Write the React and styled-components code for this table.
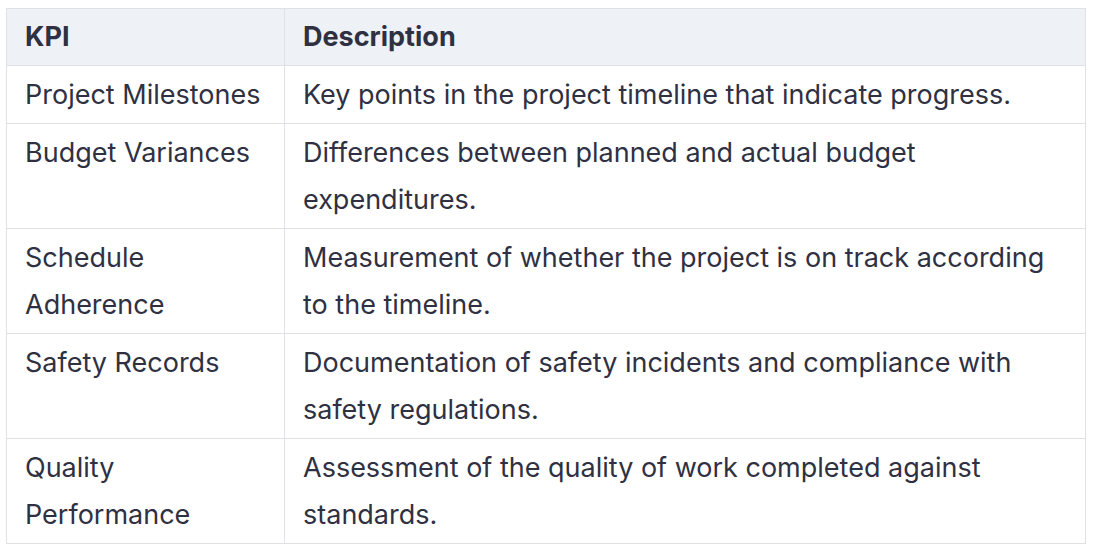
import React from 'react';
import styled, { createGlobalStyle } from 'styled-components';

const GlobalStyle = createGlobalStyle`
  body {
    margin: 0;
    background: #ffffff;
    font-family: Inter, 'Noto Sans', sans-serif;
  }
`;

const Page = styled.div`
  padding: 8px 0 0 6px;
`;

const Table = styled.table`
  width: 1080px;
  table-layout: fixed;
  border-collapse: collapse;
  font-size: 27px;
  line-height: 47px;
  color: #2f3142;
`;

const HeadCell = styled.th`
  box-sizing: border-box;
  background: #eef1f5;
  border: 1px solid #dfe1e4;
  padding: 4px 18px 5px 18px;
  text-align: left;
  font-weight: 700;
  width: ${(p) => p.$width || 'auto'};
`;

const Cell = styled.td`
  border: 1px solid #dfe1e4;
  padding: 5px 18px 5px 18px;
  vertical-align: top;
  font-weight: 400;
`;

const rows = [
  ['Project Milestones', 'Key points in the project timeline that indicate progress.'],
  ['Budget Variances', 'Differences between planned and actual budget expenditures.'],
  ['Schedule Adherence', 'Measurement of whether the project is on track according to the timeline.'],
  ['Safety Records', 'Documentation of safety incidents and compliance with safety regulations.'],
  ['Quality Performance', 'Assessment of the quality of work completed against standards.'],
];

const App = () => {
  return (
    <Page>
      <GlobalStyle />
      <Table>
        <thead>
          <tr>
            <HeadCell $width="278px">KPI</HeadCell>
            <HeadCell>Description</HeadCell>
          </tr>
        </thead>
        <tbody>
          {rows.map(([kpi, desc]) => (
            <tr key={kpi}>
              <Cell>{kpi}</Cell>
              <Cell>{desc}</Cell>
            </tr>
          ))}
        </tbody>
      </Table>
    </Page>
  );
};

export default App;
